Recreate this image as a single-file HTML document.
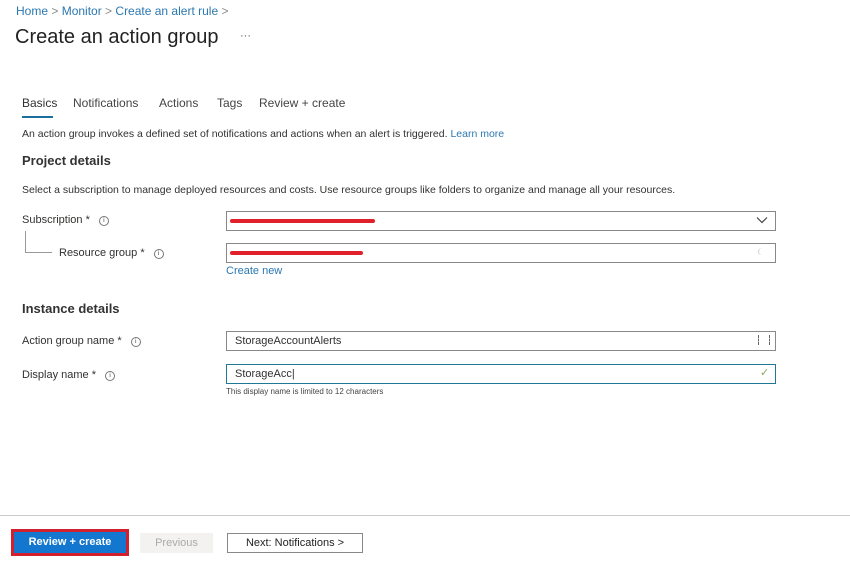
<!DOCTYPE html>
<html><head><style>
body{margin:0;width:850px;height:562px;background:#fff;font-family:"Liberation Sans",sans-serif;color:#323130;position:relative;overflow:hidden}
.a{position:absolute;white-space:nowrap}
.lnk{color:#2b78b0}
.inp{position:absolute;left:226px;width:540px;height:18px;border:1px solid #8a8886;background:#fff;font-size:11px;line-height:18px;padding-left:8px;box-sizing:content-box}
.info{display:inline-block;width:8px;height:8px;border:1px solid #777;border-radius:50%;font-size:6px;line-height:8px;text-align:center;margin-left:6px;vertical-align:1px}
.red{position:absolute;height:4px;background:#e0202a;border-radius:2px}
</style></head><body>
<div class="a lnk" style="left:16px;top:4px;font-size:12px">Home <span style="color:#888">&gt;</span> Monitor <span style="color:#888">&gt;</span> Create an alert rule <span style="color:#888">&gt;</span></div>
<div class="a" style="left:15px;top:26px;font-size:20px;color:#222">Create an action group</div>
<div class="a" style="left:240px;top:30px;font-size:11px;color:#555">···</div>
<div class="a" style="left:22px;top:96px;font-size:12px">Basics</div>
<div class="a" style="left:22px;top:116px;width:31px;height:2px;background:#1c6e9c"></div>
<div class="a" style="left:73px;top:96px;font-size:12px;color:#444">Notifications</div>
<div class="a" style="left:159px;top:96px;font-size:12px;color:#444">Actions</div>
<div class="a" style="left:217px;top:96px;font-size:12px;color:#444">Tags</div>
<div class="a" style="left:259px;top:96px;font-size:12px;color:#444">Review + create</div>
<div class="a" style="left:22px;top:128px;font-size:10.5px">An action group invokes a defined set of notifications and actions when an alert is triggered. <span class="lnk">Learn more</span></div>
<div class="a" style="left:22px;top:153px;font-size:13px;font-weight:bold;color:#333">Project details</div>
<div class="a" style="left:22px;top:184px;font-size:10.5px">Select a subscription to manage deployed resources and costs. Use resource groups like folders to organize and manage all your resources.</div>
<div class="a" style="left:22px;top:214px;font-size:11px">Subscription * <span class="info">i</span></div>
<div class="a" style="left:25px;top:231px;width:26px;height:21px;border-left:1px solid #999;border-bottom:1px solid #999"></div>
<div class="a" style="left:59px;top:247px;font-size:11px">Resource group * <span class="info">i</span></div>
<div class="inp" style="top:211px"></div>
<div class="red" style="left:230px;top:219px;width:145px"></div>
<svg class="a" style="left:756px;top:216px" width="12" height="8" viewBox="0 0 12 8"><path d="M1 1.5L6 6.5L11 1.5" fill="none" stroke="#444" stroke-width="1.2"/></svg>
<div class="inp" style="top:243px"></div>
<div class="red" style="left:230px;top:251px;width:133px"></div>
<div class="a" style="left:758px;top:248px;width:7px;height:7px;border-radius:50%;border-left:1px solid #ccc"></div>
<div class="a lnk" style="left:226px;top:265px;font-size:11px">Create new</div>
<div class="a" style="left:22px;top:301px;font-size:13px;font-weight:bold;color:#333">Instance details</div>
<div class="a" style="left:22px;top:335px;font-size:11px">Action group name * <span class="info">i</span></div>
<div class="inp" style="top:331px">StorageAccountAlerts</div>
<div class="a" style="left:758px;top:335px;width:10px;height:10px;border:1px dashed #666;border-width:0 1px"></div>
<div class="a" style="left:22px;top:369px;font-size:11px">Display name * <span class="info">i</span></div>
<div class="inp" style="top:364px;border-color:#1f7896">StorageAcc|</div>
<div class="a" style="left:760px;top:366px;font-size:11px;color:#8aa85c">&#10003;</div>
<div class="a" style="left:226px;top:387px;font-size:8px;color:#444">This display name is limited to 12 characters</div>
<div class="a" style="left:0;top:515px;width:850px;height:1px;background:#ccc"></div>
<div class="a" style="left:11px;top:529px;width:112px;height:21px;border:3px solid #d3202e;background:#1377cf;color:#fff;font-size:11px;font-weight:bold;text-align:center;line-height:21px">Review + create</div>
<div class="a" style="left:140px;top:533px;width:73px;height:20px;background:#f3f2f1;color:#aaa;font-size:11px;text-align:center;line-height:20px">Previous</div>
<div class="a" style="left:227px;top:533px;width:134px;height:18px;border:1px solid #8a8886;color:#222;font-size:11px;text-align:center;line-height:18px">Next: Notifications &gt;</div>
</body></html>
